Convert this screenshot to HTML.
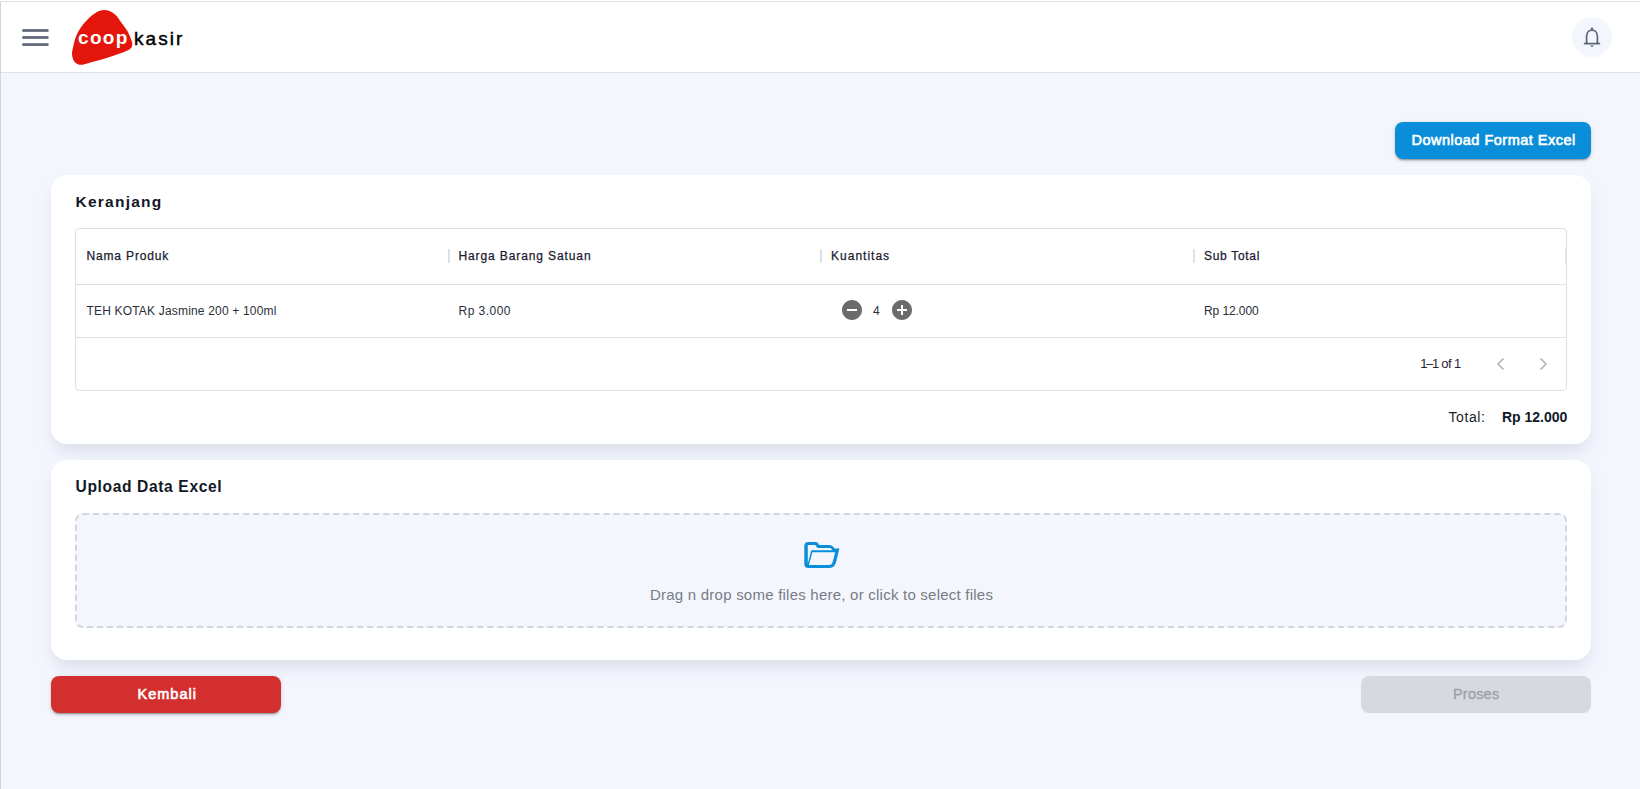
<!DOCTYPE html>
<html><head><meta charset="utf-8">
<style>
*{box-sizing:border-box;margin:0;padding:0}
html,body{width:1640px;height:789px;overflow:hidden}
body{background:#f3f6fd;font-family:"Liberation Sans",sans-serif;position:relative;color:#111827}
.a{position:absolute;white-space:nowrap;line-height:1}
#topline{position:absolute;left:0;top:1px;width:1640px;height:1px;background:#e1e3e1}
#leftline{position:absolute;left:0;top:2px;width:1px;height:787px;background:#d1d5de;z-index:5}
#header{position:absolute;left:0;top:0;width:1640px;height:73px;background:#fff;border-bottom:1px solid #dfe0e2}
.card{position:absolute;background:#fff;border-radius:16px;box-shadow:0 10px 16px -3px rgba(150,156,176,.26)}
.btn{position:absolute;border-radius:8px}
.tbl{position:absolute;border:1px solid #e0e0e0;border-radius:4px}
.hl{position:absolute;height:1px;background:#e0e0e0}
.sep{position:absolute;width:2px;height:14px;background:#e0e0e0}
</style></head>
<body>
<div id="header"></div>
<div id="topline"></div>
<div id="leftline"></div>

<!-- hamburger -->
<svg class="a" style="left:0;top:0" width="60" height="72" viewBox="0 0 60 72">
  <rect x="22.3" y="29.1" width="26.2" height="2.75" fill="#626979"/>
  <rect x="22.3" y="36.1" width="26.2" height="2.75" fill="#626979"/>
  <rect x="22.3" y="43.2" width="26.2" height="2.75" fill="#626979"/>
</svg>

<!-- logo -->
<svg class="a" style="left:60px;top:0" width="140" height="72" viewBox="60 0 140 72">
  <path d="M104.2 10.1 C107.6 10.1 111.5 11.8 114.4 13.9 C117.3 16.0 119.3 19.8 121.5 22.7 C123.7 25.6 126.1 28.8 127.7 31.6 C129.3 34.4 130.3 37.5 131.1 39.6 C131.9 41.8 132.6 42.9 132.3 44.5 C132.0 46.1 132.1 47.8 129.4 49.5 C126.7 51.2 120.8 53.1 116.2 54.8 C111.6 56.5 106.5 58.2 101.7 59.6 C96.9 61.0 90.9 62.5 87.3 63.4 C83.7 64.3 82.2 65.1 80.0 64.8 C77.8 64.5 75.6 63.3 74.3 61.5 C73.0 59.7 72.1 56.9 72.0 54.1 C71.9 51.3 73.2 46.9 73.7 44.5 C74.2 42.1 74.2 41.8 75.0 39.6 C75.8 37.5 76.7 34.4 78.3 31.6 C79.9 28.8 81.9 25.6 84.5 22.7 C87.1 19.8 90.7 16.0 94.0 13.9 C97.3 11.8 100.8 10.1 104.2 10.1Z" fill="#e4160c"/>
</svg>
<div class="a" id="coop" style="letter-spacing:1.33px;left:78px;top:27.7px;font-size:19px;font-weight:bold;color:#fff">coop</div>
<div class="a" id="kasir" style="letter-spacing:2.05px;left:134px;top:28.5px;font-size:19px;color:#000;-webkit-text-stroke:0.45px #000">kasir</div>

<!-- bell -->
<div class="a" style="left:1572px;top:17px;width:40px;height:40px;border-radius:50%;background:#f3f6fd"></div>
<svg class="a" style="left:1580px;top:25px" width="24" height="24" viewBox="0 0 24 24">
  <path d="M6.6 18 V11.2 C6.6 7.6 8.9 5.1 12 5.1 C15.1 5.1 17.4 7.6 17.4 11.2 V18" fill="none" stroke="#5f6676" stroke-width="1.75"/>
  <path d="M4.6 18.6 H19.4" stroke="#5f6676" stroke-width="1.75" stroke-linecap="round"/>
  <path d="M5.8 18.6 L7.2 17.2 M18.2 18.6 L16.8 17.2" stroke="#5f6676" stroke-width="1.4"/>
  <circle cx="12" cy="3.8" r="1.25" fill="#5f6676"/>
  <path d="M10.1 20.4 H13.9 C13.7 21.3 12.9 21.8 12 21.8 C11.1 21.8 10.3 21.3 10.1 20.4Z" fill="#5f6676"/>
</svg>

<!-- download button -->
<div class="btn" style="left:1395px;top:122px;width:196px;height:36.5px;background:#0b8ed9;box-shadow:0 3px 1px -2px rgba(0,0,0,.2),0 2px 2px 0 rgba(0,0,0,.14),0 1px 5px 0 rgba(0,0,0,.12)"></div>
<div class="a" id="dl" style="letter-spacing:0.49px;left:1411.5px;top:132.5px;font-size:14.5px;color:#fff;-webkit-text-stroke:0.6px #fff">Download Format Excel</div>

<!-- card 1 -->
<div class="card" style="left:51px;top:175px;width:1540px;height:269px"></div>
<div class="a" id="t1" style="letter-spacing:1.24px;left:75.5px;top:194.2px;font-size:15.5px;font-weight:bold;color:#111827">Keranjang</div>

<div class="tbl" style="left:75px;top:228px;width:1492px;height:163px"></div>
<div class="hl" style="left:76px;top:284px;width:1490px"></div>
<div class="hl" style="left:76px;top:337px;width:1490px"></div>
<div class="sep" style="left:448px;top:249px"></div>
<div class="sep" style="left:820px;top:249px"></div>
<div class="sep" style="left:1193px;top:249px"></div>
<div class="sep" style="left:1565px;top:249px;width:1px"></div>

<div class="a" id="h1" style="letter-spacing:0.84px;left:86.5px;top:250.3px;font-size:12px;color:#1a2030;-webkit-text-stroke:0.25px #1a2030">Nama Produk</div>
<div class="a" id="h2" style="letter-spacing:0.89px;left:458.5px;top:250.3px;font-size:12px;color:#1a2030;-webkit-text-stroke:0.25px #1a2030">Harga Barang Satuan</div>
<div class="a" id="h3" style="letter-spacing:1.01px;left:831px;top:250.3px;font-size:12px;color:#1a2030;-webkit-text-stroke:0.25px #1a2030">Kuantitas</div>
<div class="a" id="h4" style="letter-spacing:0.69px;left:1204px;top:250.3px;font-size:12px;color:#1a2030;-webkit-text-stroke:0.25px #1a2030">Sub Total</div>

<div class="a" id="r1" style="letter-spacing:0.18px;left:86.5px;top:304.8px;font-size:12px;color:#2a2e38">TEH KOTAK Jasmine 200 + 100ml</div>
<div class="a" id="r2" style="letter-spacing:0.47px;left:458.5px;top:304.8px;font-size:12px;color:#2a2e38">Rp 3.000</div>
<div class="a" id="r3" style="left:873px;top:304.8px;font-size:12px;color:#2a2e38">4</div>
<div class="a" id="r4" style="letter-spacing:-0.09px;left:1204px;top:304.8px;font-size:12px;color:#2a2e38">Rp 12.000</div>

<svg class="a" style="left:840px;top:298px" width="24" height="24" viewBox="0 0 24 24"><path fill="#6b6b6b" d="M12 2C6.48 2 2 6.48 2 12s4.48 10 10 10 10-4.48 10-10S17.52 2 12 2zm5 11H7v-2h10v2z"/></svg>
<svg class="a" style="left:890px;top:298px" width="24" height="24" viewBox="0 0 24 24"><path fill="#6b6b6b" d="M12 2C6.48 2 2 6.48 2 12s4.48 10 10 10 10-4.48 10-10S17.52 2 12 2zm5 11h-4v4h-2v-4H7v-2h4V7h2v4h4v2z"/></svg>

<div class="a" id="pg1" style="left:1420.2px;top:357.2px;font-size:13px;color:#2a2233">1</div>
<div class="a" id="pg2" style="left:1426px;top:357.2px;font-size:13px;color:#2a2233;transform:scaleX(0.95)">–</div>
<div class="a" id="pg3" style="left:1431.9px;top:357.2px;font-size:13px;color:#2a2233">1</div>
<div class="a" id="pg4" style="left:1441.2px;top:357.2px;font-size:13px;color:#2a2233;letter-spacing:-0.3px">of</div>
<div class="a" id="pg5" style="left:1454.1px;top:357.2px;font-size:13px;color:#2a2233">1</div>
<svg class="a" style="left:1488px;top:352px" width="24" height="24" viewBox="0 0 24 24"><path fill="none" stroke="#b4b4b4" stroke-width="1.6" d="M15.5 6.5 L10 12 L15.5 17.5"/></svg>
<svg class="a" style="left:1532px;top:352px" width="24" height="24" viewBox="0 0 24 24"><path fill="none" stroke="#b4b4b4" stroke-width="1.6" d="M8.5 6.5 L14 12 L8.5 17.5"/></svg>

<div class="a" id="tot" style="letter-spacing:0.58px;left:1448.5px;top:410px;font-size:14px;color:#1a1e28">Total:</div>
<div class="a" id="totv" style="left:1502px;top:410px;font-size:14px;font-weight:bold;color:#111827">Rp 12.000</div>

<!-- card 2 -->
<div class="card" style="left:51px;top:460px;width:1540px;height:200px"></div>
<div class="a" id="t2" style="letter-spacing:0.63px;left:75.5px;top:479.3px;font-size:15.6px;font-weight:bold;color:#111827">Upload Data Excel</div>
<div class="a" style="left:75px;top:513px;width:1492px;height:115px;border:2px dashed #d2d5dc;border-radius:8px;background:#f3f6fd"></div>
<svg class="a" style="left:798px;top:535px" width="48" height="40" viewBox="798 535 48 40"><path fill-rule="evenodd" fill="#0b8ed9" d="M808.6 541.9 H815.3 Q817.6 541.9 818.4 543.6 L819.2 544.9 H829.2 Q832.6 544.9 834.6 548.4 H839.4 L836.2 561.8 Q834.8 568 829.6 568 H808.6 Q804.3 568 804.3 563.7 V546.2 Q804.3 541.9 808.6 541.9 Z M807.8 544.9 H815.4 L816.6 547.1 Q817.2 548.1 818.6 548.1 H830.6 L832.4 550.3 H811.3 L807.8 563.6 Z M812.4 552.2 H835.2 L832.6 562 Q832 564.9 829.2 564.9 H808.9 Z"/></svg>
<div class="a" id="drop" style="letter-spacing:0.23px;left:650px;top:586.6px;font-size:15px;color:#787c84">Drag n drop some files here, or click to select files</div>

<!-- buttons -->
<div class="btn" style="left:51px;top:676px;width:230px;height:36.6px;background:#d32f2f;box-shadow:0 3px 1px -2px rgba(0,0,0,.2),0 2px 2px 0 rgba(0,0,0,.14),0 1px 5px 0 rgba(0,0,0,.12)"></div>
<div class="a" id="kb" style="letter-spacing:1.0px;left:137.5px;top:686.5px;font-size:14.5px;color:#fff;-webkit-text-stroke:0.6px #fff">Kembali</div>
<div class="btn" style="left:1361px;top:676px;width:230px;height:36.6px;background:#d6d9df"></div>
<div class="a" id="pr" style="letter-spacing:0.2px;left:1453px;top:686.5px;font-size:14.5px;color:#9ea2a9;-webkit-text-stroke:0.35px #9ea2a9">Proses</div>
</body></html>
